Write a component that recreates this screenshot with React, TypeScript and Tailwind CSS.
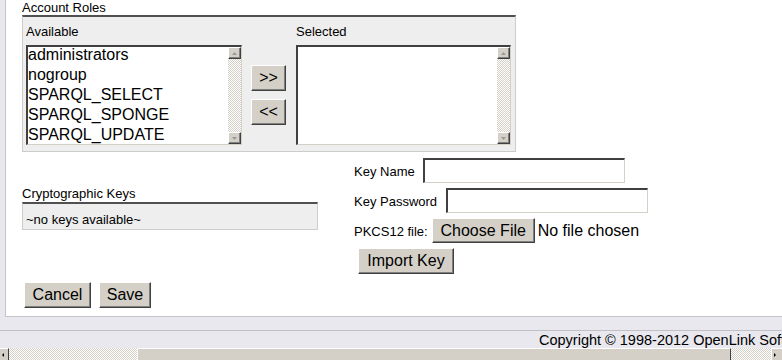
import React from 'react';

const available = ['administrators', 'nogroup', 'SPARQL_SELECT', 'SPARQL_SPONGE', 'SPARQL_UPDATE'];

function Arrow({ dir, color }: { dir: 'up' | 'down' | 'left' | 'right'; color: string }) {
  const pts = {
    up: '0,3 2.5,0 5,3',
    down: '0,0 5,0 2.5,3',
    left: '2,0 2,4 0,2',
    right: '0,0 0,4 2,2',
  }[dir];
  const w = dir === 'up' || dir === 'down' ? 5 : 2;
  const h = dir === 'up' || dir === 'down' ? 3 : 4;
  return (
    <svg width={w} height={h} viewBox={`0 0 ${w} ${h}`} className="block">
      <polygon points={pts} fill={color} />
    </svg>
  );
}

function ScrollBtn({ dir }: { dir: 'up' | 'down' }) {
  return (
    <div className="h-[12px] flex items-center justify-center bg-[#d4d0c8] border border-t-white border-l-white border-r-[#404040] border-b-[#404040] shadow-[inset_-1px_-1px_0_#808080]">
      <Arrow dir={dir} color="#9a9a9a" />
    </div>
  );
}

function ListBox({ items, width }: { items: string[]; width: string }) {
  return (
    <div className={`${width} h-[100px] flex overflow-hidden bg-white border-t-2 border-l-2 border-t-[#404040] border-l-[#404040] border-r border-b border-r-[#d4d0c8] border-b-[#d4d0c8]`}>
      <div className="flex-1 overflow-hidden">
        {items.map(item => (
          <div key={item} className="h-[20px] text-[16px] leading-[16px] whitespace-nowrap">
            {item}
          </div>
        ))}
      </div>
      <div className="w-[13px] flex flex-col">
        <ScrollBtn dir="up" />
        <div className="flex-1 bg-[repeating-conic-gradient(#d4d0c8_0%_25%,#ffffff_0%_50%)] bg-[length:2px_2px]" />
        <ScrollBtn dir="down" />
      </div>
    </div>
  );
}

function Btn({ children, className = '' }: { children: React.ReactNode; className?: string }) {
  return (
    <button
      type="button"
      className={`flex items-center justify-center bg-[#d4d0c8] border border-t-white border-l-white border-r-[#404040] border-b-[#404040] shadow-[inset_-1px_-1px_0_#808080] text-[16px] leading-[18px] text-black whitespace-nowrap ${className}`}
    >
      {children}
    </button>
  );
}

const inputCls =
  'h-[25px] w-[202px] bg-white border-t-2 border-l-2 border-t-[#404040] border-l-[#404040] border-r border-b border-r-[#d4d0c8] border-b-[#d4d0c8] outline-none';

export default function App() {
  return (
    <div className="h-[360px] w-[782px] overflow-hidden flex flex-col bg-[#e8e8ee] text-black font-['Liberation_Sans',Arial,sans-serif]">
      {/* page body */}
      <div className="ml-[5px] h-[317px] shrink-0 bg-white border-l border-b border-[#c4c4ca] pl-[16px]">
        {/* Account Roles */}
        <div className="text-[13px] leading-[15px] h-[15px]">Account Roles</div>
        <div className="w-[494px] flex bg-[#eeeeee] border-t-2 border-t-[#505050] border-x border-b border-x-[#cccccc] border-b-[#cccccc] pt-[7px] pl-[3px] pb-[6px]">
          <div>
            <div className="text-[13px] leading-[15px]">Available</div>
            <div className="mt-[6px]">
              <ListBox items={available} width="w-[216px]" />
            </div>
          </div>
          <div className="ml-[9px] pt-[41px] flex flex-col gap-[8px]">
            <Btn className="w-[35px] h-[26px]">&gt;&gt;</Btn>
            <Btn className="w-[35px] h-[26px]">&lt;&lt;</Btn>
          </div>
          <div className="ml-[10px]">
            <div className="text-[13px] leading-[15px]">Selected</div>
            <div className="mt-[6px]">
              <ListBox items={[]} width="w-[215px]" />
            </div>
          </div>
        </div>

        {/* keys */}
        <div className="mt-[6px] flex items-start">
          <div className="w-[296px] mt-[28px]">
            <div className="text-[13px] leading-[16px]">Cryptographic Keys</div>
            <div className="h-[28px] bg-[#eeeeee] border-t-2 border-t-[#505050] border-x border-b border-x-[#cccccc] border-b-[#cccccc] pl-[3px] pt-[8px] text-[13px] leading-[15px]">
              ~no keys available~
            </div>
          </div>
          <div className="ml-[36px] flex flex-col gap-[5px]">
            <div className="flex items-start h-[25px]">
              <span className="pt-[6px] text-[13px] leading-[15px]">Key Name</span>
              <input className={`${inputCls} ml-[8px]`} />
            </div>
            <div className="flex items-start h-[25px]">
              <span className="pt-[6px] text-[13px] leading-[15px]">Key Password</span>
              <input type="password" className={`${inputCls} ml-[9px]`} />
            </div>
            <div className="flex items-start h-[25px]">
              <span className="pt-[6px] text-[13px] leading-[15px]">PKCS12 file:</span>
              <Btn className="ml-[4px] w-[103px] h-[25px]">Choose File</Btn>
              <span className="ml-[3px] pt-[4px] text-[16px] leading-[18px] whitespace-nowrap">No file chosen</span>
            </div>
            <div className="h-[26px]">
              <Btn className="ml-[4px] w-[96px] h-[26px]">Import Key</Btn>
            </div>
          </div>
        </div>

        <div className="mt-[8px] ml-[2px] flex gap-[8px]">
          <Btn className="w-[67px] h-[26px]">Cancel</Btn>
          <Btn className="w-[52px] h-[26px]">Save</Btn>
        </div>
      </div>

      {/* footer */}
      <div className="mt-[13px] h-[18px] shrink-0 border-t border-[#c0c0c6] pl-[539px] pt-[1px] text-[14.5px] leading-[16px] whitespace-nowrap overflow-hidden">
        Copyright © 1998-2012 OpenLink Software
      </div>

      {/* horizontal scrollbar */}
      <div className="h-[12px] shrink-0 flex">
        <div className="w-[9px] flex items-center pl-[2px] bg-[#d4d0c8] border-t border-t-white border-r border-r-[#404040]">
          <Arrow dir="left" color="#000000" />
        </div>
        <div className="w-[128px] bg-[repeating-conic-gradient(#d4d0c8_0%_25%,#ffffff_0%_50%)] bg-[length:2px_2px]" />
        <div className="w-[594px] bg-[#d4d0c8] border-t border-l border-t-white border-l-white border-r border-r-[#404040]" />
        <div className="flex-1 bg-[repeating-conic-gradient(#d4d0c8_0%_25%,#ffffff_0%_50%)] bg-[length:2px_2px]" />
        <div className="w-[11px] flex items-center pl-[2px] bg-[#d4d0c8] border-t border-l border-t-white border-l-white">
          <Arrow dir="right" color="#000000" />
        </div>
      </div>
    </div>
  );
}
